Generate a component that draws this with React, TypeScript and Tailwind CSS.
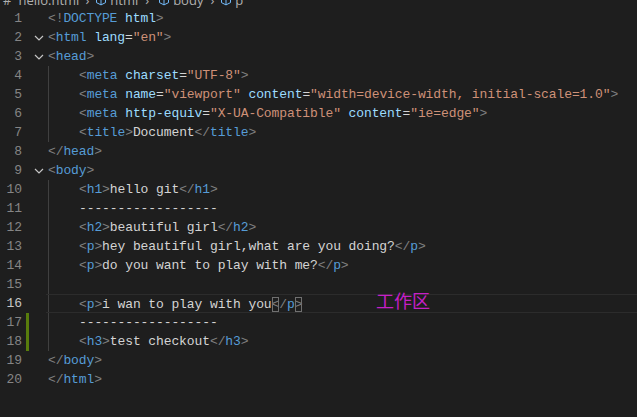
const C = {
  br: "text-[#808080]",
  tag: "text-[#569cd6]",
  attr: "text-[#9cdcfe]",
  str: "text-[#ce9178]",
  txt: "text-[#d4d4d4]",
};

type Tok = [string, string];
type Line = { indent: number; fold?: boolean; git?: boolean; active?: boolean; toks: Tok[] };

const open = (t: string): Tok[] => [["<", C.br], [t, C.tag], [">", C.br]];
const close = (t: string): Tok[] => [["</", C.br], [t, C.tag], [">", C.br]];
const attr = (n: string, v: string): Tok[] => [[" ", C.txt], [n, C.attr], ["=", C.txt], ['"' + v + '"', C.str]];

const LINES: Line[] = [
  { indent: 0, toks: [["<!", C.br], ["DOCTYPE", C.tag], [" ", C.txt], ["html", C.attr], [">", C.br]] },
  { indent: 0, fold: true, toks: [["<", C.br], ["html", C.tag], ...attr("lang", "en"), [">", C.br]] },
  { indent: 0, fold: true, toks: open("head") },
  { indent: 1, toks: [["<", C.br], ["meta", C.tag], ...attr("charset", "UTF-8"), [">", C.br]] },
  {
    indent: 1,
    toks: [["<", C.br], ["meta", C.tag], ...attr("name", "viewport"), ...attr("content", "width=device-width, initial-scale=1.0"), [">", C.br]],
  },
  {
    indent: 1,
    toks: [["<", C.br], ["meta", C.tag], ...attr("http-equiv", "X-UA-Compatible"), ...attr("content", "ie=edge"), [">", C.br]],
  },
  { indent: 1, toks: [...open("title"), ["Document", C.txt], ...close("title")] },
  { indent: 0, toks: close("head") },
  { indent: 0, fold: true, toks: open("body") },
  { indent: 1, toks: [...open("h1"), ["hello git", C.txt], ...close("h1")] },
  { indent: 1, toks: [["------------------", C.txt]] },
  { indent: 1, toks: [...open("h2"), ["beautiful girl", C.txt], ...close("h2")] },
  { indent: 1, toks: [...open("p"), ["hey beautiful girl,what are you doing?", C.txt], ...close("p")] },
  { indent: 1, toks: [...open("p"), ["do you want to play with me?", C.txt], ...close("p")] },
  { indent: 1, toks: [] },
  { indent: 1, active: true, toks: [] },
  { indent: 1, git: true, toks: [["------------------", C.txt]] },
  { indent: 1, git: true, toks: [...open("h3"), ["test checkout", C.txt], ...close("h3")] },
  { indent: 0, toks: close("body") },
  { indent: 0, toks: close("html") },
];

function Cube() {
  return (
    <svg width="12" height="12" viewBox="0 0 16 16" fill="none" stroke="#75beff" strokeWidth="1.3">
      <path d="M8 1.5 14 4.5v7L8 14.5 2 11.5v-7z" />
      <path d="M2 4.5 8 7.5l6-3M8 7.5v7" />
    </svg>
  );
}

function Chevron() {
  return (
    <svg width="10" height="6" viewBox="0 0 10 6" fill="none" stroke="#c5c5c5" strokeWidth="1.2">
      <path d="M1 1l4 4 4-4" />
    </svg>
  );
}

function ActiveCode() {
  return (
    <>
      <span className={C.br}>&lt;</span>
      <span className={C.tag}>p</span>
      <span className={C.br}>&gt;</span>
      <span className={C.txt}>i wan to play with you</span>
      <span className="outline outline-1 -outline-offset-1 outline-[#707070] text-[#808080]">&lt;</span>
      <span className={C.br}>/</span>
      <span className={C.tag}>p</span>
      <span className="outline outline-1 -outline-offset-1 outline-[#707070] text-[#808080]">&gt;</span>
    </>
  );
}

export default function App() {
  return (
    <div
      className="relative w-[637px] h-[417px] overflow-hidden bg-[#1e1e1e] text-[13px] tracking-[-0.1px]"
      style={{ fontFamily: '"Liberation Mono", "DejaVu Sans Mono", monospace' }}
    >
      <div
        className="h-[9px] overflow-hidden text-[13px] text-[#b0b0b0] tracking-normal"
        style={{ fontFamily: '"Open Sans", "Liberation Sans", sans-serif' }}
      >
        <div className="flex items-center -mt-[8px] leading-[16px] whitespace-nowrap">
          <span className="ml-[3px]">#</span>
          <span className="ml-[7px]">hello.html</span>
          <span className="ml-[6px]">›</span>
          <span className="ml-[6px]"><Cube /></span>
          <span className="ml-[3px]">html</span>
          <span className="ml-[7px]">›</span>
          <span className="ml-[9px]"><Cube /></span>
          <span className="ml-[3px]">body</span>
          <span className="ml-[7px]">›</span>
          <span className="ml-[6px]"><Cube /></span>
          <span className="ml-[3px]">p</span>
        </div>
      </div>

      <div className="flex flex-col">
        {LINES.map((ln, i) => (
          <div key={i} className="flex h-[19px] leading-[19px]">
            <div className={"w-[22px] text-right " + (ln.active ? "text-[#c6c6c6]" : "text-[#858585]")}>{i + 1}</div>
            <div className="w-[4px]" />
            <div className={"w-[3px] " + (ln.git ? "bg-[#587c0c]" : "")} />
            <div className="w-[19px] flex items-center justify-center">{ln.fold ? <Chevron /> : null}</div>
            <div
              className={
                "flex-1 flex whitespace-pre " + (ln.active ? "border-y border-[#2c2c2c] -ml-[2px] pl-[2px]" : "")
              }
            >
              {ln.indent > 0 && <span className="w-[31px] shrink-0 border-l border-[#404040]" />}
              <span>{ln.active ? <ActiveCode /> : ln.toks.map((t, j) => <span key={j} className={t[1]}>{t[0]}</span>)}</span>
            </div>
          </div>
        ))}
      </div>

      <div
        className="absolute left-[376px] top-[289px] text-[18px] leading-[22px] text-[#c61fc6] tracking-normal"
        style={{ fontFamily: '"Noto Sans CJK SC", sans-serif' }}
      >
        工作区
      </div>
    </div>
  );
}
